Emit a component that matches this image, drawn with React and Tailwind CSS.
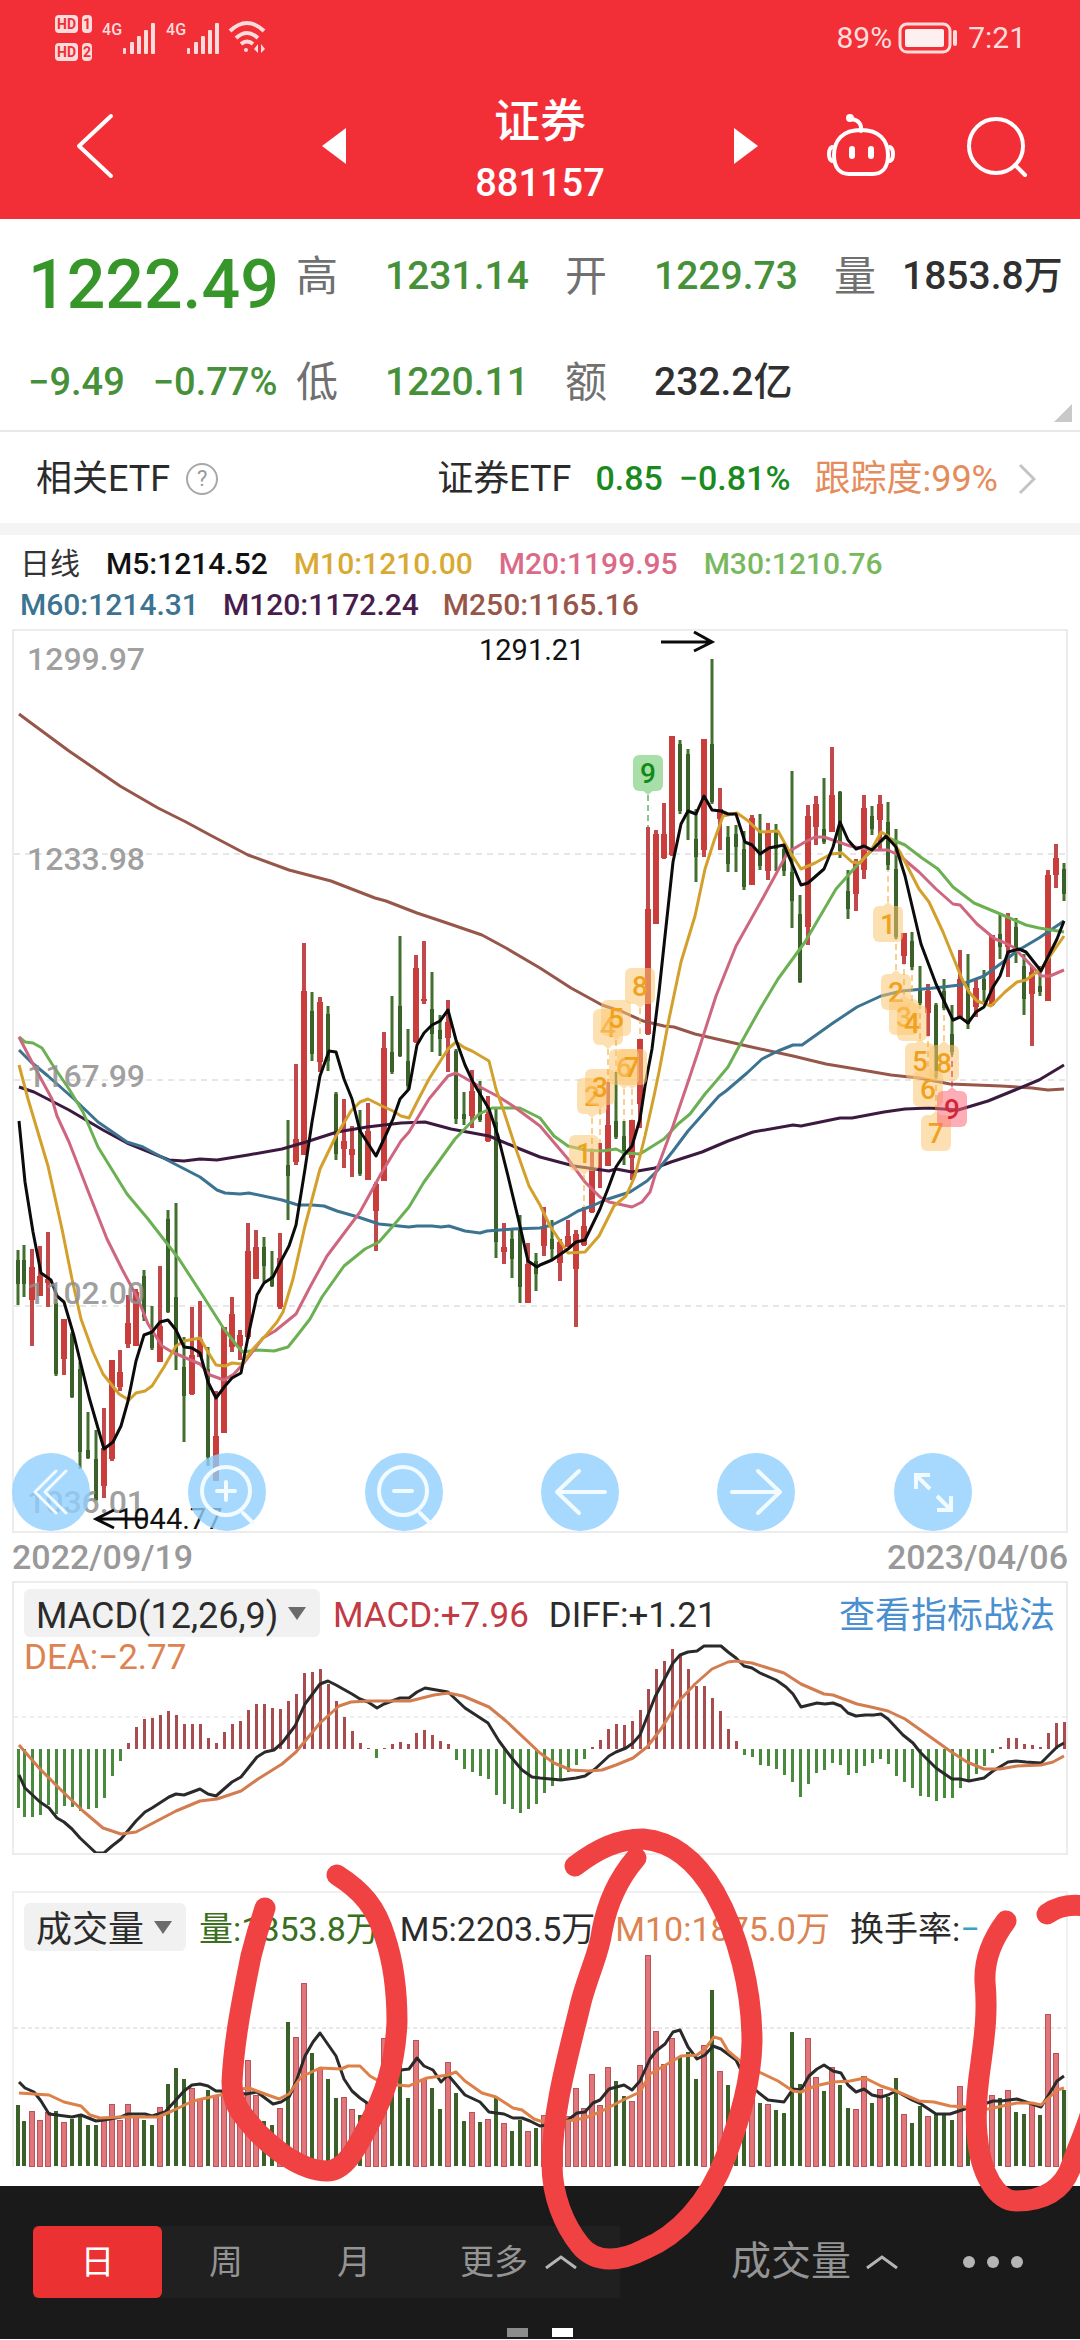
const UP = '#c93d3b'
const DOWN = '#3a6127'

// [direction, high, low, body top, body bottom] in chart units
const CANDLES = [
  ['d', 1251, 1306, 1261, 1285], ['d', 1246, 1298, 1261, 1285], ['u', 1250, 1347, 1268, 1301], ['u', 1247, 1297, 1277, 1297],
  ['u', 1233, 1308, 1280, 1284], ['d', 1300, 1377, 1304, 1375], ['u', 1320, 1376, 1320, 1360], ['d', 1333, 1399, 1335, 1398],
  ['d', 1363, 1470, 1370, 1453], ['d', 1413, 1460, 1451, 1459], ['d', 1431, 1502, 1460, 1501], ['u', 1409, 1499, 1449, 1487],
  ['u', 1361, 1462, 1361, 1460], ['u', 1351, 1392, 1373, 1388], ['u', 1296, 1349, 1324, 1345], ['u', 1290, 1347, 1293, 1347],
  ['d', 1271, 1322, 1277, 1318], ['d', 1307, 1351, 1330, 1349], ['u', 1267, 1363, 1327, 1363], ['d', 1211, 1314, 1220, 1313],
  ['d', 1204, 1371, 1298, 1355], ['d', 1338, 1443, 1368, 1397], ['u', 1308, 1396, 1356, 1395], ['u', 1302, 1358, 1340, 1358],
  ['d', 1348, 1467, 1370, 1458], ['u', 1392, 1482, 1437, 1482], ['u', 1328, 1434, 1328, 1434], ['u', 1298, 1353, 1315, 1348],
  ['u', 1331, 1361, 1336, 1347], ['u', 1224, 1340, 1252, 1338], ['u', 1231, 1280, 1248, 1280], ['d', 1238, 1283, 1248, 1267],
  ['d', 1252, 1288, 1277, 1287], ['u', 1234, 1310, 1259, 1308], ['d', 1121, 1221, 1166, 1177], ['u', 1065, 1166, 1140, 1163],
  ['u', 944, 1156, 992, 1156], ['d', 993, 1062, 1012, 1055], ['u', 998, 1073, 1003, 1063], ['d', 1007, 1072, 1015, 1062],
  ['d', 1093, 1161, 1095, 1155], ['u', 1100, 1169, 1142, 1150], ['u', 1127, 1178, 1150, 1156], ['d', 1111, 1177, 1130, 1175],
  ['u', 1104, 1181, 1132, 1181], ['u', 1183, 1252, 1185, 1212], ['u', 1033, 1182, 1049, 1182], ['d', 997, 1075, 1053, 1073],
  ['d', 937, 1058, 1007, 1057], ['d', 1030, 1090, 1062, 1087], ['u', 956, 1044, 969, 1043], ['u', 942, 1005, 1000, 1002],
  ['d', 973, 1053, 1010, 1035], ['d', 1016, 1057, 1031, 1040], ['u', 1001, 1073, 1023, 1039], ['d', 1050, 1125, 1052, 1120],
  ['d', 1093, 1126, 1115, 1120], ['u', 1071, 1129, 1092, 1117], ['d', 1082, 1123, 1090, 1121], ['u', 1097, 1143, 1115, 1142],
  ['d', 1108, 1259, 1123, 1243], ['u', 1224, 1265, 1248, 1253], ['d', 1229, 1279, 1240, 1260], ['d', 1216, 1304, 1230, 1288],
  ['u', 1244, 1304, 1265, 1304], ['d', 1254, 1292, 1262, 1275], ['u', 1208, 1257, 1229, 1247], ['d', 1221, 1260, 1240, 1250],
  ['u', 1240, 1282, 1243, 1264], ['u', 1221, 1248, 1237, 1248], ['u', 1231, 1328, 1235, 1270], ['u', 1208, 1247, 1227, 1246],
  ['u', 1150, 1214, 1170, 1213], ['u', 1144, 1189, 1170, 1172], ['u', 1083, 1167, 1126, 1167], ['d', 1073, 1140, 1122, 1138],
  ['d', 1122, 1166, 1137, 1153], ['u', 1121, 1181, 1121, 1159], ['u', 1040, 1129, 1040, 1105], ['u', 828, 1036, 910, 1035],
  ['u', 831, 925, 835, 925], ['u', 804, 860, 835, 859], ['u', 737, 857, 737, 856], ['d', 741, 815, 745, 812],
  ['d', 750, 841, 755, 812], ['d', 810, 883, 840, 858], ['u', 740, 858, 740, 851], ['d', 660, 805, 745, 803],
  ['u', 789, 851, 810, 820], ['d', 827, 873, 838, 865], ['d', 826, 873, 835, 848], ['d', 832, 891, 850, 888],
  ['u', 816, 886, 819, 886], ['d', 815, 871, 833, 867], ['u', 824, 881, 833, 872], ['d', 825, 872, 832, 850],
  ['d', 845, 877, 850, 872], ['d', 772, 929, 873, 902], ['d', 896, 984, 915, 983], ['u', 806, 946, 817, 928],
  ['u', 797, 846, 805, 828], ['d', 779, 845, 830, 843], ['u', 748, 833, 796, 833], ['d', 792, 859, 793, 852],
  ['d', 871, 920, 892, 910], ['u', 860, 912, 863, 895], ['u', 796, 880, 809, 871], ['d', 807, 836, 817, 830],
  ['u', 796, 850, 805, 821], ['d', 803, 871, 823, 866], ['d', 830, 940, 870, 938], ['u', 934, 965, 934, 957],
  ['d', 933, 971, 942, 968], ['d', 967, 1006, 990, 1004], ['u', 985, 1037, 992, 1014], ['d', 1004, 1080, 1006, 1078],
  ['d', 980, 1011, 992, 1009], ['d', 1006, 1056, 1035, 1053], ['u', 951, 1018, 980, 1018], ['d', 955, 1030, 990, 1025],
  ['u', 980, 1018, 989, 1008], ['d', 971, 1003, 980, 991], ['u', 936, 1007, 936, 1006], ['d', 915, 960, 935, 948],
  ['u', 914, 978, 919, 948], ['d', 919, 964, 928, 953], ['d', 955, 1016, 967, 1000], ['u', 967, 1047, 973, 995],
  ['d', 967, 997, 987, 993], ['u', 871, 1002, 876, 1002], ['u', 845, 889, 859, 876], ['d', 864, 902, 870, 895],
]

const MA_LINES = [
  { color: '#97564a', points: '19,715 27,721 69,752 120,787 158,809 186,823 210,836 248,856 289,871 331,882 375,899 386,902 417,914 444,923 482,936 506,949 540,969 571,989 602,1006 623,1013 643,1022 664,1027 674,1028 695,1035 747,1047 793,1057 826,1065 850,1069 891,1076 919,1079 950,1085 1001,1087 1032,1089 1048,1091 1064,1090' },
  { color: '#3c1a40', points: '19,1088 34,1093 69,1111 103,1131 127,1144 169,1161 184,1162 200,1160 217,1161 248,1156 282,1150 306,1143 337,1133 367,1128 401,1124 425,1123 451,1130 489,1137 520,1150 540,1158 574,1167 609,1172 616,1170 632,1173 655,1169 671,1163 702,1153 728,1142 753,1133 793,1126 801,1127 840,1119 852,1119 884,1113 905,1110 929,1109 958,1111 988,1102 1015,1091 1039,1081 1064,1066' },
  { color: '#3b7391', points: '19,1051 31,1063 48,1077 74,1100 98,1123 127,1143 143,1148 169,1162 200,1178 217,1191 225,1194 240,1195 249,1194 282,1201 298,1206 312,1206 324,1207 337,1212 358,1218 379,1225 409,1228 417,1227 432,1227 441,1228 449,1227 465,1232 480,1234 487,1232 513,1230 540,1229 552,1226 568,1218 578,1212 592,1207 605,1201 630,1193 647,1182 657,1172 673,1152 688,1132 719,1097 726,1092 747,1074 762,1060 778,1052 793,1046 802,1046 833,1024 857,1008 881,997 902,992 934,989 960,986 984,977 1003,963 1017,952 1039,939 1064,922' },
  { color: '#6bb052', points: '19,1038 25,1043 33,1044 42,1049 52,1065 69,1090 83,1113 98,1148 127,1195 148,1220 179,1260 203,1297 224,1330 238,1348 243,1353 258,1351 274,1352 288,1348 296,1338 310,1320 322,1298 344,1267 365,1250 379,1243 393,1227 409,1208 424,1183 455,1140 479,1115 492,1109 520,1109 540,1119 554,1137 568,1147 585,1151 602,1152 616,1150 624,1154 640,1155 664,1140 678,1125 690,1115 705,1095 712,1087 728,1068 736,1053 760,1010 778,980 805,943 836,890 860,863 886,838 905,846 922,859 938,870 953,888 974,904 998,914 1026,926 1039,929 1064,933' },
  { color: '#cf6680', points: '19,1038 34,1067 52,1100 57,1117 69,1143 90,1197 107,1240 122,1270 138,1300 148,1325 162,1347 172,1353 200,1365 210,1376 224,1381 234,1375 243,1365 263,1339 275,1332 296,1315 310,1288 327,1257 360,1213 382,1173 401,1142 409,1133 429,1100 448,1077 456,1074 465,1079 482,1089 499,1098 513,1107 540,1127 568,1160 585,1183 600,1198 609,1203 632,1208 642,1203 650,1193 657,1170 673,1127 688,1083 698,1053 716,997 736,947 764,897 788,853 805,843 815,838 824,838 850,847 871,851 888,851 900,857 919,873 936,890 953,905 960,906 977,925 995,940 1003,943 1013,948 1027,962 1041,977 1050,977 1064,971' },
  { color: '#d3a02c', points: '19,1066 28,1100 48,1167 62,1230 72,1280 81,1320 93,1353 103,1375 119,1395 129,1401 136,1394 145,1392 152,1387 164,1368 176,1347 184,1342 200,1339 208,1353 216,1366 225,1367 232,1364 242,1365 253,1350 267,1335 277,1323 283,1313 293,1280 305,1227 320,1170 336,1137 351,1112 360,1103 368,1100 382,1107 393,1112 401,1117 409,1119 417,1103 429,1080 448,1050 456,1043 465,1049 472,1052 489,1062 496,1090 503,1110 517,1153 529,1187 540,1206 550,1227 568,1254 585,1253 599,1237 614,1207 626,1197 635,1177 645,1137 654,1097 659,1073 669,1020 681,963 695,917 705,870 714,842 723,817 737,814 747,821 760,833 778,832 788,850 801,870 815,864 831,855 842,854 852,863 860,864 872,850 881,833 888,837 900,853 919,890 929,903 943,933 962,980 969,993 977,1002 991,1007 1005,993 1017,983 1026,981 1041,970 1064,937' },
  { color: '#0b0b0b', points: '19,1122 25,1183 33,1233 41,1274 51,1281 57,1297 64,1303 74,1337 89,1398 104,1450 113,1443 121,1427 128,1402 136,1362 144,1336 152,1333 160,1323 168,1321 176,1331 184,1348 192,1349 200,1354 208,1383 216,1399 225,1387 232,1379 241,1374 249,1333 257,1296 264,1284 273,1278 281,1262 289,1247 296,1226 305,1170 312,1123 320,1077 329,1052 336,1053 344,1080 352,1100 360,1132 376,1157 384,1140 393,1120 400,1100 409,1090 417,1046 424,1034 432,1026 440,1022 448,1011 456,1041 465,1066 473,1083 480,1095 489,1110 498,1137 508,1177 520,1227 528,1262 537,1268 540,1266 552,1261 568,1250 576,1243 585,1241 600,1210 609,1187 616,1168 624,1156 632,1147 640,1120 645,1087 652,1050 659,993 665,937 673,863 681,825 688,812 696,815 704,797 712,811 721,812 728,815 736,815 745,843 752,846 760,855 769,849 784,846 793,867 801,886 808,884 824,870 833,848 840,823 848,841 856,850 864,847 872,851 886,837 896,848 905,877 921,945 936,985 953,1021 960,1018 968,1024 976,1013 984,1008 993,988 1000,977 1008,953 1019,950 1026,953 1041,972 1048,958 1057,940 1064,922' },
]

const MACD_BARS = [
  -59, -68, -68, -66, -56, -65, -57, -58, -62, -60, -59, -49, -27, -12, 6, 22, 30, 31, 34, 38, 34, 25, 25, 25, 11, 6,
  17, 25, 28, 39, 45, 45, 41, 40, 48, 55, 76, 77, 80, 65, 48, 32, 18, 6, 1, -9, 1, 5, 7, 5, 16, 19, 14, 8, 5, -11,
  -20, -23, -27, -30, -46, -55, -60, -64, -60, -55, -44, -37, -31, -23, -16, -10, 2, 9, 20, 25, 24, 28, 39, 60, 80,
  88, 100, 93, 80, 63, 63, 51, 38, 20, 8, -6, -8, -16, -17, -20, -26, -33, -48, -35, -24, -21, -14, -16, -26, -24,
  -17, -14, -10, -15, -27, -33, -39, -47, -48, -52, -49, -49, -39, -33, -25, -17, -4, 2, 11, 11, 5, 4, 2, 16, 26, 27,
]
const DIFF_LINE = '19,1776 25,1789 40,1803 49,1809 57,1819 64,1823 72,1830 80,1839 96,1854 104,1854 112,1847 121,1840 136,1822 145,1813 152,1809 169,1798 176,1795 184,1796 200,1790 208,1795 216,1797 232,1783 241,1778 257,1758 265,1753 274,1751 282,1744 295,1727 305,1705 320,1685 328,1682 336,1686 352,1695 360,1700 368,1703 377,1709 384,1705 400,1699 409,1699 417,1693 425,1689 448,1693 465,1709 488,1724 499,1742 511,1758 522,1771 532,1778 540,1779 561,1781 576,1779 585,1777 595,1770 609,1757 616,1753 626,1749 633,1744 640,1736 655,1698 673,1664 680,1656 688,1653 697,1652 704,1647 721,1647 728,1653 736,1659 744,1667 752,1669 760,1674 776,1681 786,1688 793,1695 801,1708 817,1704 825,1705 833,1704 841,1707 848,1714 856,1717 865,1716 874,1716 881,1715 888,1720 903,1736 913,1744 920,1753 936,1769 952,1780 960,1780 969,1782 984,1779 993,1772 1008,1763 1016,1762 1026,1763 1041,1764 1057,1748 1064,1744'
const DEA_LINE = '19,1746 40,1770 62,1792 83,1812 103,1829 121,1835 136,1833 155,1823 176,1812 200,1802 217,1800 241,1792 258,1780 282,1765 296,1753 320,1724 339,1707 351,1703 368,1702 410,1702 434,1696 448,1694 463,1697 489,1708 506,1722 540,1754 554,1764 571,1771 588,1772 602,1771 616,1766 633,1759 647,1748 661,1730 678,1703 695,1685 712,1670 728,1663 736,1662 752,1664 784,1674 801,1685 824,1695 833,1696 857,1705 871,1708 888,1712 905,1720 922,1732 950,1752 967,1763 984,1770 1000,1770 1017,1767 1041,1766 1053,1763 1064,1757'

const VOLUMES = [
  61, 45, 55, 46, 54, 55, 44, 47, 52, 41, 41, 49, 62, 46, 62, 50, 46, 41, 59, 82, 98, 87, 78, 67, 76, 70, 74, 77, 72,
  106, 71, 45, 41, 58, 144, 129, 183, 113, 98, 87, 68, 69, 57, 51, 64, 70, 128, 77, 107, 68, 126, 87, 78, 57, 104, 73,
  45, 54, 44, 47, 69, 43, 35, 46, 35, 38, 51, 47, 54, 50, 78, 58, 92, 61, 99, 85, 70, 65, 101, 211, 135, 102, 128, 110,
  114, 87, 121, 176, 95, 81, 70, 47, 70, 63, 62, 56, 53, 134, 82, 128, 89, 75, 99, 81, 58, 57, 90, 63, 77, 69, 88, 52,
  43, 60, 50, 52, 52, 46, 80, 57, 60, 62, 71, 68, 76, 54, 52, 64, 51, 152, 113, 76,
]
const VOL_M5 = '19,2083 25,2089 34,2093 41,2102 49,2115 57,2116 72,2118 81,2116 96,2122 104,2121 121,2118 128,2115 145,2115 152,2117 165,2113 176,2101 184,2092 192,2086 200,2085 208,2087 216,2092 224,2092 246,2095 257,2093 265,2099 273,2105 281,2103 289,2098 296,2083 305,2057 313,2043 320,2034 336,2057 344,2080 352,2092 360,2099 370,2106 376,2104 393,2077 401,2071 409,2070 417,2059 424,2067 433,2071 441,2083 448,2076 465,2096 480,2103 489,2113 504,2115 513,2119 522,2119 530,2122 540,2127 554,2125 568,2121 577,2114 585,2113 593,2104 600,2101 609,2090 624,2086 632,2091 640,2082 650,2060 656,2052 665,2045 673,2033 680,2031 688,2048 697,2060 705,2056 713,2047 721,2050 736,2061 747,2083 759,2094 768,2101 784,2103 793,2090 801,2091 809,2077 817,2070 824,2066 833,2072 841,2074 848,2086 856,2093 864,2090 872,2096 881,2098 888,2096 896,2092 912,2101 921,2105 936,2115 950,2115 965,2110 984,2105 993,2102 1001,2102 1017,2100 1041,2108 1048,2097 1057,2082 1064,2077'
const VOL_M10 = '19,2094 49,2096 64,2103 81,2107 90,2116 100,2119 121,2118 158,2118 172,2112 193,2102 220,2096 241,2090 249,2089 265,2095 279,2100 289,2095 301,2078 320,2069 341,2070 348,2067 360,2067 370,2077 384,2085 409,2087 417,2083 427,2079 448,2076 456,2073 465,2082 482,2094 496,2098 513,2109 522,2111 534,2120 540,2122 568,2122 585,2119 600,2113 623,2101 640,2093 650,2075 664,2067 681,2057 697,2056 705,2050 714,2038 721,2040 728,2052 740,2062 759,2073 778,2082 793,2092 801,2093 815,2087 833,2083 850,2082 865,2079 881,2087 896,2092 919,2102 934,2103 950,2107 967,2108 988,2110 1017,2104 1032,2104 1041,2106 1057,2091 1064,2089'

const GOLD_BADGE = { fill: '#fcc873', text: '#f0a11e' }
// TD sequence marks: [digit, x, centre y, y where the dashed line ends]
const MARKS_TOP = [
  ['1', 584, 1154, 1208], ['2', 592, 1097, 1150], ['3', 600, 1088, 1144], ['4', 608, 1028, 1083],
  ['5', 616, 1019, 1073], ['6', 624, 1068, 1122], ['7', 632, 1068, 1121], ['8', 640, 987, 1040],
]
const MARKS_BOTTOM = [
  ['1', 888, 925, 871], ['2', 896, 993, 940], ['3', 904, 1018, 965], ['4', 912, 1024, 971], ['5', 920, 1062, 1006],
  ['6', 928, 1090, 1037], ['7', 936, 1134, 1080], ['8', 944, 1064, 1011],
]

const AXIS = [['1299.97', 671], ['1233.98', 871], ['1167.99', 1088], ['1102.00', 1305], ['1036.01', 1514]]

const xAt = (i) => (i === 0 ? 18 : i === 1 ? 24 : 32 + (i - 2) * 8)

function Line({ points, color }) {
  return <polyline points={points} fill="none" stroke={color} strokeWidth="3" strokeLinejoin="round" />
}

function Mark({ digit, x, y, end, fill, color }) {
  const down = end > y
  const tip = down ? y + 22 : y - 22
  const base = down ? y + 17 : y - 17
  return (
    <g>
      <line x1={x} x2={x} y1={tip} y2={end} stroke={color} strokeWidth="1" strokeDasharray="6 4" />
      <g fill={fill} opacity="0.55">
        <rect x={x - 15} y={y - 18} width="30" height="36" rx="6" />
        <path d={`M${x - 6} ${base} L${x} ${tip} L${x + 6} ${base} Z`} />
      </g>
      <text x={x} y={y + 10} textAnchor="middle" fontSize="28" fontWeight="500" fill={color}>{digit}</text>
    </g>
  )
}

function StatusBar() {
  return (
    <div className="flex h-[72px] items-center justify-between pl-[55px] pr-[54px] text-[#ffdcdc]">
      <div className="flex items-center pt-[3px]">
        <div className="flex flex-col gap-[10px] text-[14px] font-bold leading-[18px] text-[#f22f37]">
          {['1', '2'].map((n) => (
            <div key={n} className="flex gap-1">
              <span className="rounded bg-[#ffdcdc] px-[2px]">HD</span>
              <span className="rounded bg-[#ffdcdc] px-px">{n}</span>
            </div>
          ))}
        </div>
        <Signal />
        <Signal />
        <svg className="ml-2" width="40" height="36" viewBox="0 0 40 36" fill="none" stroke="currentColor" strokeWidth="4">
          <path d="M2 11 Q19 -5 36 11" />
          <path d="M8 18 Q19 8 30 18" />
          <path d="M13 24 Q19 19 25 24" />
          <circle cx="18" cy="30" r="2" fill="currentColor" stroke="none" />
          <path d="M30 24 v9 l-4 -4 z M33 24 v9 l4 -4 z" fill="currentColor" stroke="none" />
        </svg>
      </div>
      <div className="flex items-center gap-[6px] pt-[3px] text-[30px]">
        <span>89%</span>
        <svg width="60" height="32" viewBox="0 0 60 32" fill="none">
          <rect x="2" y="2" width="50" height="28" rx="7" stroke="currentColor" strokeWidth="3" />
          <rect x="7" y="7" width="39" height="18" rx="2" fill="#fff0f0" />
          <rect x="55" y="8" width="4" height="16" rx="2" fill="currentColor" />
        </svg>
        <span className="ml-1">7:21</span>
      </div>
    </div>
  )
}

function Signal() {
  return (
    <div className="ml-[10px] flex items-start">
      <span className="text-[16px] font-medium leading-4">4G</span>
      <svg width="34" height="32" viewBox="0 0 34 32" fill="currentColor">
        <rect x="1" y="26" width="3" height="6" rx="1" />
        <rect x="8" y="20" width="4" height="12" rx="1" />
        <rect x="15" y="14" width="4" height="18" rx="1" />
        <rect x="22" y="8" width="4" height="24" rx="1" />
        <rect x="29" y="1" width="4" height="31" rx="1" />
      </svg>
    </div>
  )
}

function Header() {
  return (
    <header className="bg-[#f22f37] text-white">
      <StatusBar />
      <div className="grid h-[147px] grid-cols-[3fr_4fr_3fr] items-center">
        <div className="pl-[74px]">
          <button type="button" aria-label="返回" className="block">
            <svg width="42" height="68" viewBox="0 0 42 68" fill="none" stroke="currentColor" strokeWidth="4" strokeLinecap="round" strokeLinejoin="round">
              <path d="M37 4 L5 34 L37 64" />
            </svg>
          </button>
        </div>
        <div className="-mx-[2px] flex items-center justify-between">
          <button type="button" aria-label="上一个">
            <svg width="24" height="36" viewBox="0 0 24 36" fill="currentColor"><path d="M24 0 L0 18 L24 36 Z" /></svg>
          </button>
          <div className="pt-3 text-center leading-[62px]">
            <h1 className="text-[46px] font-medium">证券</h1>
            <p className="text-[38px] font-medium">881157</p>
          </div>
          <button type="button" aria-label="下一个">
            <svg width="24" height="36" viewBox="0 0 24 36" fill="currentColor"><path d="M0 0 L24 18 L0 36 Z" /></svg>
          </button>
        </div>
        <div className="flex items-center justify-end gap-[70px] pr-[52px]">
          <button type="button" aria-label="智能助手">
            <svg width="70" height="66" viewBox="0 0 70 66" fill="none" stroke="currentColor" strokeWidth="4" strokeLinecap="round">
              <path d="M35 18 C36 12 33 7 26 6" />
              <circle cx="24" cy="5" r="3" fill="currentColor" strokeWidth="2" />
              <path d="M35 17 C53 17 62 27 62 42 C62 56 55 61 47 61 L23 61 C15 61 8 56 8 42 C8 27 17 17 35 17 Z" />
              <path d="M6 34 C2 36 2 46 6 48 M64 34 C68 36 68 46 64 48" />
              <path d="M26 36 v7 M45 36 v7" strokeWidth="6" />
            </svg>
          </button>
          <button type="button" aria-label="搜索">
            <svg width="62" height="64" viewBox="0 0 62 64" fill="none" stroke="currentColor" strokeWidth="4" strokeLinecap="round">
              <circle cx="30" cy="32" r="27" />
              <path d="M49 51 L59 61" />
            </svg>
          </button>
        </div>
      </div>
    </header>
  )
}

function Quote() {
  return (
    <section className="relative border-b-2 border-[#e8e8e8] text-[39px] font-medium text-[#46903a]">
      <div className="grid grid-cols-[268fr_89fr_180fr_89fr_180fr_68fr_178fr] grid-rows-[115px_96px] items-center pl-7">
        <strong className="pt-4 text-[68px] font-medium text-[#37962a]">1222.49</strong>
        <span className="font-normal text-[#707070] text-[42px]">高</span>
        <span>1231.14</span>
        <span className="font-normal text-[#707070] text-[42px]">开</span>
        <span>1229.73</span>
        <span className="font-normal text-[#707070] text-[42px]">量</span>
        <span className="whitespace-nowrap text-[#303030]">1853.8万</span>
        <span className="flex gap-7 text-[38px]"><span>−9.49</span><span>−0.77%</span></span>
        <span className="font-normal text-[#707070] text-[42px]">低</span>
        <span>1220.11</span>
        <span className="font-normal text-[#707070] text-[42px]">额</span>
        <span className="whitespace-nowrap text-[#303030]">232.2亿</span>
      </div>
      <svg className="absolute bottom-2 right-2" width="18" height="18" viewBox="0 0 18 18" fill="#c9c9c9"><path d="M18 0 V18 H0 Z" /></svg>
    </section>
  )
}

function EtfRow() {
  return (
    <section className="flex h-[103px] items-center justify-between border-b-12 border-[#f4f4f4] pl-9 pr-11 pt-[2px] text-[36px] text-[#2b2b2b]">
      <div className="flex items-center gap-4">
        <span>相关ETF</span>
        <button type="button" aria-label="说明" className="size-8 rounded-full border-2 border-[#a8a8a8] text-[22px] leading-7 text-[#9a9a9a]">?</button>
      </div>
      <a href="#etf" className="flex items-center">
        <span>证券ETF</span>
        <span className="ml-6 text-[34px] font-medium text-[#1a8a1f]">0.85</span>
        <span className="ml-4 text-[34px] font-medium text-[#1a8a1f]">−0.81%</span>
        <span className="ml-6 text-[#e58c5c]">跟踪度:99%</span>
        <svg className="ml-5" width="18" height="32" viewBox="0 0 18 32" fill="none" stroke="#c4c4c4" strokeWidth="3"><path d="M2 2 L16 16 L2 30" /></svg>
      </a>
    </section>
  )
}

function MaLegend() {
  return (
    <div className="px-5 pb-[4px] pt-[8px] text-[30px] font-medium leading-[41px]">
      <div className="flex gap-[26px]">
        <span className="font-normal text-[#333]">日线</span>
        <span className="text-[#111]">M5:1214.52</span>
        <span className="text-[#d9aa33]">M10:1210.00</span>
        <span className="text-[#db6a87]">M20:1199.95</span>
        <span className="text-[#78b85e]">M30:1210.76</span>
      </div>
      <div className="flex gap-6">
        <span className="text-[#3b7391]">M60:1214.31</span>
        <span className="text-[#481c4d]">M120:1172.24</span>
        <span className="text-[#97564a]">M250:1165.16</span>
      </div>
    </div>
  )
}

function ChartTool({ label, children }) {
  return (
    <button type="button" aria-label={label} className="size-[78px] rounded-full bg-[#90d0fd]/80">
      <svg width="78" height="78" viewBox="0 0 78 78" fill="none" stroke="#f2fbff" strokeWidth="4" strokeLinecap="round" strokeLinejoin="round">
        {children}
      </svg>
    </button>
  )
}

function PriceChart() {
  return (
    <section className="relative mx-3 border-2 border-[#ececec]">
      <svg className="block w-full" viewBox="14 632 1052 900">
        <g stroke="#e6e6e6" strokeWidth="2" strokeDasharray="6 5">
          <path d="M14 855 H1066 M14 1081 H1066 M14 1307 H1066" />
        </g>
        {CANDLES.map(([dir, high, low, top, bottom], i) => {
          const up = dir === 'u'
          return (
            <g key={i}>
              <rect x={xAt(i) - (up ? 2 : 1.5)} y={high} width={up ? 4 : 3} height={low - high} fill={up ? '#c2494b' : '#43702f'} />
              <rect x={xAt(i) - (up ? 3 : 2)} y={top} width={up ? 6 : 4} height={bottom - top} fill={up ? UP : DOWN} />
            </g>
          )
        })}
        {MA_LINES.map((line) => <Line key={line.color} {...line} />)}
        {MARKS_TOP.map(([d, x, y, end]) => <Mark key={d} digit={d} x={x} y={y} end={end} fill={GOLD_BADGE.fill} color={GOLD_BADGE.text} />)}
        {MARKS_BOTTOM.map(([d, x, y, end]) => <Mark key={d} digit={d} x={x} y={y} end={end} fill={GOLD_BADGE.fill} color={GOLD_BADGE.text} />)}
        <Mark digit="9" x={648} y={774} end={828} fill="#62c462" color="#128a1a" />
        <Mark digit="9" x={952} y={1110} end={1056} fill="#fb6b7c" color="#d42638" />
        <g fill="#8f8f8f" fillOpacity="0.85" fontSize="32" fontWeight="500">
          {AXIS.map(([label, y]) => <text key={label} x="27" y={y}>{label}</text>)}
        </g>
        <g fontSize="29" fill="#111">
          <text x="479" y="661">1291.21</text>
          <text x="117" y="1530">1044.77</text>
        </g>
        <g fill="none" stroke="#0b0b0b" strokeWidth="3">
          <path d="M661 643 H711 M694 633 L712 643 L694 652" />
          <path d="M147 1520 H97 M114 1511 L96 1520 L114 1529" />
        </g>
      </svg>
      <div className="absolute -left-[2px] -right-1 bottom-0 grid grid-cols-6">
        <ChartTool label="后退">
          <path d="M44 18 L23 39 L44 60 M54 18 L33 39 L54 60" strokeWidth="3" />
        </ChartTool>
        <ChartTool label="放大">
          <circle cx="38" cy="38" r="24" />
          <path d="M38 29 V47 M29 38 H47 M55 60 L65 70" />
        </ChartTool>
        <ChartTool label="缩小">
          <circle cx="38" cy="38" r="24" />
          <path d="M29 38 H47 M55 60 L65 70" />
        </ChartTool>
        <ChartTool label="左移">
          <path d="M64 39 H16 M38 18 L16 39 L38 60" />
        </ChartTool>
        <ChartTool label="右移">
          <path d="M15 39 H62 M41 18 L63 39 L41 60" />
        </ChartTool>
        <ChartTool label="全屏">
          <path d="M36 22 H22 V36 M22 22 L36 36 M43 57 H57 V43 M57 57 L43 43" strokeLinecap="butt" strokeLinejoin="miter" />
        </ChartTool>
      </div>
    </section>
  )
}

function IndicatorSelect({ label, options, className }) {
  return (
    <label className="relative block">
      <span className="sr-only">{label}</span>
      <select className={`h-12 appearance-none rounded-md bg-[#f1f1f1] pl-3 text-[36px] font-normal text-[#2b2b2b] ${className}`}>
        {options.map((o) => <option key={o}>{o}</option>)}
      </select>
      <svg className="pointer-events-none absolute right-[14px] top-[18px]" width="18" height="13" viewBox="0 0 18 13" fill="#6b6b6b"><path d="M0 0 H18 L9 13 Z" /></svg>
    </label>
  )
}

function MacdPanel() {
  return (
    <section className="relative mx-3 border-2 border-[#ececec]">
      <svg className="block w-full" viewBox="14 1584 1052 270">
        <path d="M14 1718 H1066" stroke="#dcdcdc" strokeWidth="1" strokeDasharray="4 4" />
        {MACD_BARS.map((v, i) => (
          <rect key={i} x={xAt(i) - 1} y={v > 0 ? 1750 - v : 1750} width="3" height={Math.abs(v)} fill={v > 0 ? '#a94c50' : '#4a8a3c'} />
        ))}
        <Line points={DIFF_LINE} color="#2a2a2a" />
        <Line points={DEA_LINE} color="#d27c50" />
      </svg>
      <div className="absolute inset-x-0 top-0 pl-[10px] pr-[11px] pt-[9px] text-[35px]">
        <div className="flex h-12 items-center">
          <IndicatorSelect label="副图指标" options={['MACD(12,26,9)', 'KDJ', 'RSI']} className="w-[296px]" />
          <span className="ml-[13px] text-[#c23a44]">MACD:+7.96</span>
          <span className="ml-5 text-[#2b2b2b]">DIFF:+1.21</span>
          <a href="#guide" className="ml-auto text-[36px] text-[#4a8fd0]">查看指标战法</a>
        </div>
        <div className="leading-9 text-[#dd8351]">DEA:−2.77</div>
      </div>
    </section>
  )
}

function VolumePanel() {
  return (
    <section className="relative mx-3 mt-9 border-2 border-b-0 border-[#f0f0f0]">
      <svg className="block w-full" viewBox="14 1894 1052 274">
        <path d="M14 2029 H1066" stroke="#d0d0d0" strokeWidth="1" strokeDasharray="4 3" />
        {VOLUMES.map((v, i) =>
          CANDLES[i][0] === 'u' ? (
            <rect key={i} x={xAt(i) - 2.5} y={2167.5 - v} width="5" height={v} fill="#e2757a" stroke="#b9545a" strokeWidth="1" />
          ) : (
            <rect key={i} x={xAt(i) - 2} y={2167 - v} width="4" height={v} fill={DOWN} />
          )
        )}
        <Line points={VOL_M5} color="#2a2a2a" />
        <Line points={VOL_M10} color="#dd8148" />
      </svg>
      <div className="absolute inset-x-0 top-0 flex items-center whitespace-nowrap pl-[10px] pt-[10px] text-[34px]">
        <IndicatorSelect label="成交指标" options={['成交量', '成交额']} className="w-[162px]" />
        <span className="ml-[13px] text-[#3a6f20]">量:1853.8万</span>
        <span className="ml-5 text-[#2b2b2b]">M5:2203.5万</span>
        <span className="ml-5 text-[#dd8351]">M10:1875.0万</span>
        <span className="ml-5 text-[#2b2b2b]">换手率:<span className="text-[#35a5bb]">−</span></span>
      </div>
      {/* hand-drawn circles round the volume peaks */}
      <svg
        className="pointer-events-none absolute inset-0 z-10 w-full overflow-visible"
        viewBox="14 1894 1052 274"
        fill="none"
        stroke="#f04242"
        strokeWidth="21"
        strokeLinecap="round"
        strokeLinejoin="round"
      >
        <path d="M337 1876 C362 1892 376 1908 385 1938 C395 1968 397 1998 397 2023 C395 2066 385 2096 368 2127 C355 2152 344 2172 327 2172 C300 2172 272 2148 258 2134 C240 2114 232 2105 232 2083 C234 2040 243 1997 251 1957 C256 1937 260 1924 265 1909" />
        <path d="M575 1867 C597 1850 618 1840 643 1840 C678 1843 700 1868 715 1894 C738 1935 752 1990 752 2043 C751 2082 741 2116 726 2157 C708 2205 678 2236 645 2250 C622 2262 596 2266 580 2246 C564 2226 552 2197 552 2165 C552 2110 570 2050 581 2003 C590 1970 599 1955 602 1932 C607 1905 618 1880 636 1859" />
        <path d="M1006 1922 C991 1942 984 1962 985 1983 C988 2015 984 2040 981 2063 C977 2090 975 2115 977 2135 C980 2175 997 2202 1016 2202 C1045 2202 1064 2190 1072 2165 C1080 2142 1086 2132 1092 2110" />
        <path d="M1047 1915 C1058 1907 1070 1905 1084 1907" />
      </svg>
    </section>
  )
}

function Chevron() {
  return (
    <svg width="34" height="16" viewBox="0 0 34 16" fill="none" stroke="#b5b5b5" strokeWidth="3"><path d="M2 14 L17 3 L32 14" /></svg>
  )
}

function BottomNav() {
  return (
    <nav className="mt-[19px] bg-[#1a1a1a] pb-[2px] pt-10 text-[34px] text-[#949494]">
      <div className="flex items-center justify-between pl-[33px] pr-14">
        <div className="flex h-[72px] bg-[#202020]">
          <button type="button" className="w-[129px] rounded-md bg-[#ec3133] text-white">日</button>
          <button type="button" className="w-32">周</button>
          <button type="button" className="w-32">月</button>
          <button type="button" className="flex items-center gap-4 pl-[42px] pr-[42px]">更多<Chevron /></button>
        </div>
        <button type="button" className="flex items-center gap-[14px] pl-12 text-[40px]">成交量<Chevron /></button>
        <button type="button" aria-label="更多操作">
          <svg width="62" height="14" viewBox="0 0 62 14" fill="#b5b5b5"><circle cx="7" cy="7" r="6" /><circle cx="31" cy="7" r="6" /><circle cx="55" cy="7" r="6" /></svg>
        </button>
      </div>
      <div className="mt-[30px] flex justify-center gap-6">
        <span className="h-[9px] w-[21px] bg-[#8c8c8c]" />
        <span className="h-[9px] w-[21px] bg-white" />
      </div>
    </nav>
  )
}

export default function App() {
  return (
    <div className="relative w-full overflow-hidden bg-white font-['Roboto','Noto_Sans_CJK_SC',sans-serif]">
      <Header />
      <Quote />
      <EtfRow />
      <MaLegend />
      <PriceChart />
      <div className="mx-3 flex h-12 items-center justify-between text-[34px] font-medium text-[#999]">
        <time>2022/09/19</time>
        <time>2023/04/06</time>
      </div>
      <MacdPanel />
      <VolumePanel />
      <BottomNav />
    </div>
  )
}
